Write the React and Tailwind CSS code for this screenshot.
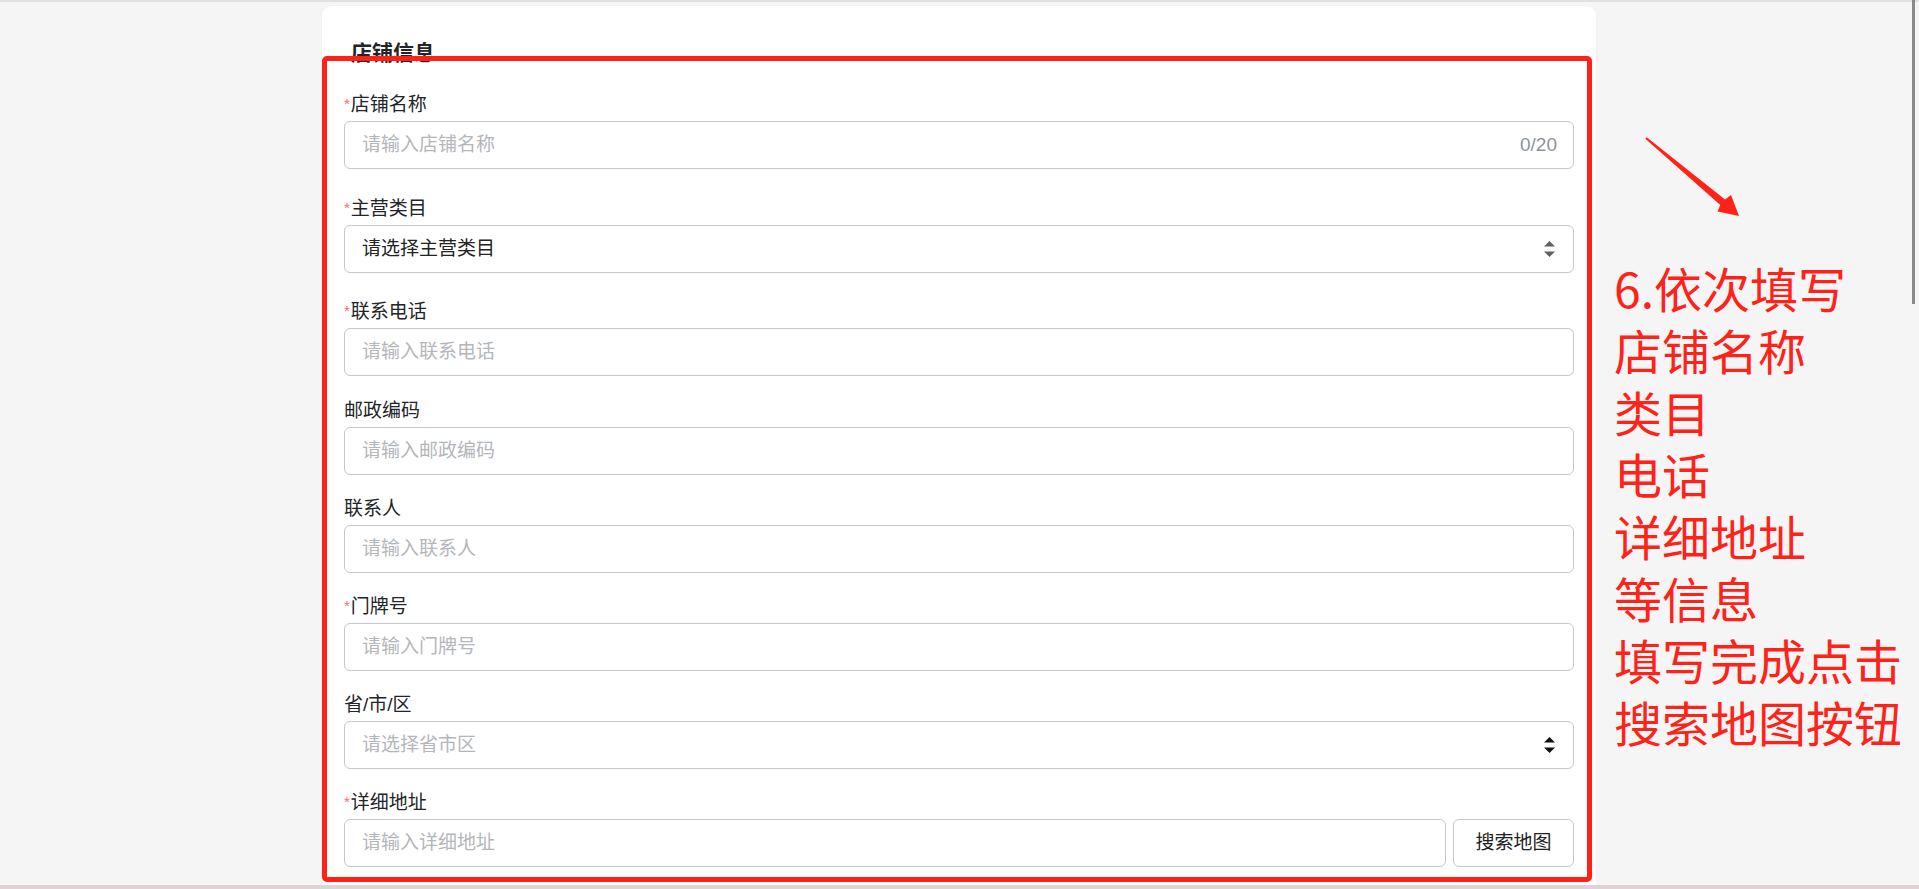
import React from "react";

const FONT = { fontFamily: '"Liberation Sans", "Noto Sans CJK SC", sans-serif' };
const CJK = { fontFamily: '"Noto Sans CJK SC", "Noto Sans", sans-serif' };

function Caret({ color }) {
  return (
    <svg width="11" height="16" viewBox="0 0 11 16" className="shrink-0">
      <polygon points="0,5.5 5.5,0 11,5.5" fill={color} />
      <polygon points="0,10.5 11,10.5 5.5,16" fill={color} />
    </svg>
  );
}

function Label({ text, required, mt }) {
  return (
    <div className={`${mt} mb-[4px] h-[24px] leading-[24px] text-[19px] text-[#222428] flex items-center`}>
      {required && <span className="text-[#f56c6c] text-[15px] leading-none mr-[1px] -mt-[4px]">*</span>}
      <span>{text}</span>
    </div>
  );
}

function TextInput({ placeholder, suffix }) {
  return (
    <div className="h-[48px] border border-[#c6c8cc] rounded-[6px] bg-white flex items-center pl-[17px] pr-[16px]">
      <span className="flex-1 text-[19px] text-[#b4b6ba]">{placeholder}</span>
      {suffix && <span className="text-[19px] text-[#8d939d]">{suffix}</span>}
    </div>
  );
}

function SelectInput({ text, dark, caretColor }) {
  return (
    <div className="h-[48px] border border-[#c6c8cc] rounded-[6px] bg-white flex items-center pl-[17px] pr-[18px]">
      <span className={`flex-1 text-[19px] ${dark ? "text-[#222222]" : "text-[#b4b6ba]"}`}>{text}</span>
      <Caret color={caretColor} />
    </div>
  );
}

export default function App() {
  const lines = ["6.依次填写", "店铺名称", "类目", "电话", "详细地址", "等信息", "填写完成点击", "搜索地图按钮"];
  return (
    <div className="relative w-full h-[889px] overflow-hidden bg-[#f5f5f5] flex flex-col" style={FONT}>
      <div className="h-[2px] bg-[#e1e1e1] shrink-0" />
      <div className="flex-1 flex pt-[4px] pl-[322px] min-h-0">
        <div className="w-[1274px] h-full bg-white rounded-t-[9px] shadow-[0_0_2px_rgba(0,0,0,0.06)] pt-[33px] px-[22px] shrink-0">
          <div className="h-[28px] leading-[28px] text-[21px] font-bold text-[#222428] pl-[7px]">店铺信息</div>

          <Label text="店铺名称" required mt="mt-[26px]" />
          <TextInput placeholder="请输入店铺名称" suffix="0/20" />

          <Label text="主营类目" required mt="mt-[28px]" />
          <SelectInput text="请选择主营类目" dark caretColor="#5f6165" />

          <Label text="联系电话" required mt="mt-[27px]" />
          <TextInput placeholder="请输入联系电话" />

          <Label text="邮政编码" mt="mt-[23px]" />
          <TextInput placeholder="请输入邮政编码" />

          <Label text="联系人" mt="mt-[22px]" />
          <TextInput placeholder="请输入联系人" />

          <Label text="门牌号" required mt="mt-[22px]" />
          <TextInput placeholder="请输入门牌号" />

          <Label text="省/市/区" mt="mt-[22px]" />
          <SelectInput text="请选择省市区" caretColor="#111111" />

          <Label text="详细地址" required mt="mt-[22px]" />
          <div className="flex gap-[7px]">
            <div className="flex-1">
              <TextInput placeholder="请输入详细地址" />
            </div>
            <button className="w-[121px] h-[48px] border border-[#c6c8cc] rounded-[6px] bg-white text-[19px] text-[#222222]">
              搜索地图
            </button>
          </div>
        </div>

        <div className="flex flex-col pl-[18px] pt-[125px]">
          <svg width="100" height="90" viewBox="0 0 100 90" className="ml-[28px] shrink-0">
            <polygon
              points="3.3,7.7 4.7,6.3 83,68.6 89,64 97,85 75.5,80.5 78.3,74"
              fill="#ff2219"
            />
          </svg>
          <div className="mt-[35px] text-[48px] leading-[62px] text-[#ff2219] whitespace-nowrap" style={CJK}>
            {lines.map((l) => (
              <div key={l} className="h-[62px]">{l}</div>
            ))}
          </div>
        </div>
      </div>
      <div className="h-[4px] bg-[#ddd5d5] shrink-0" />

      <div className="absolute left-[322px] top-[56px] w-[1270px] h-[826px] border-[5px] border-[#ff2016] rounded-[5px] pointer-events-none" />
      <div className="absolute right-[4px] top-0 w-[3px] h-[304px] bg-[#8a8a8a]" />
    </div>
  );
}
